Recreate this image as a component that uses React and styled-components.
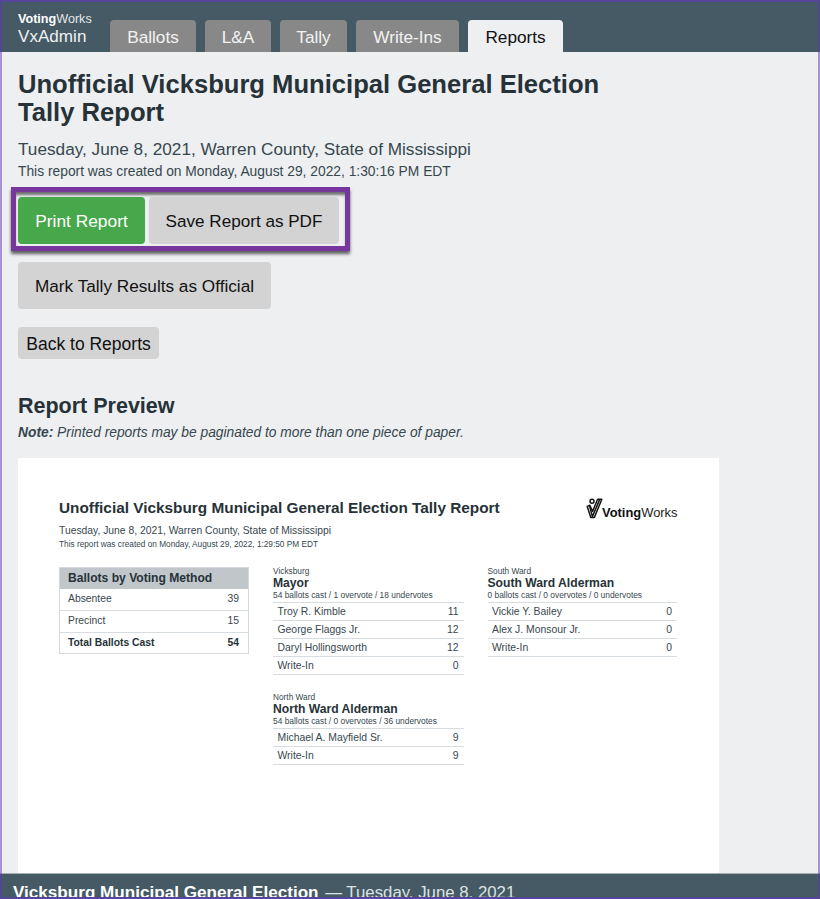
import React from 'react';
import styled, { createGlobalStyle } from 'styled-components';

const GlobalStyle = createGlobalStyle`
  * { box-sizing: border-box; }
  html, body { margin: 0; padding: 0; }
  body {
    font-family: "Liberation Sans", Arial, Helvetica, sans-serif;
    font-size: 17.2px;
    color: #37474f;
    background: #edeff0;
    overflow: hidden;
  }
  h1, h2, h3, p { margin: 0; }
`;

const Screen = styled.div`
  position: relative;
  display: flex;
  flex-direction: column;
  width: 820px;
  height: 899px;
  overflow: hidden;
  background: #edeff0;

  &::after {
    content: "";
    position: absolute;
    inset: 0;
    border: 2px solid rgba(96, 52, 190, 0.5);
    border-top-color: #58459a;
    border-bottom-color: #58459a;
    pointer-events: none;
  }
`;

const NavBar = styled.nav`
  flex: none;
  display: flex;
  align-items: flex-end;
  height: 52px;
  padding-left: 18px;
  background: #455a64;
`;

const Brand = styled.div`
  width: 92px;
  height: 40px;
  color: #fff;
`;

const BrandMaker = styled.div`
  font-size: 12.6px;
  line-height: 15px;
  color: #e4e8ea;

  strong { color: #fff; }
`;

const BrandApp = styled.div`
  font-size: 17.1px;
  line-height: 20px;
  color: #eef1f2;
`;

const Tabs = styled.div`
  display: flex;
  gap: 9px;
`;

const Tab = styled.button`
  width: ${(p) => p.$width}px;
  height: 32px;
  padding: 2px 0 0;
  border: 0;
  border-radius: 4px 4px 0 0;
  font: inherit;
  line-height: 28px;
  text-align: center;
  background: ${(p) => (p.$active ? '#edeff0' : '#888')};
  color: ${(p) => (p.$active ? '#111' : '#f3f3f3')};
`;

const Content = styled.main`
  flex: 1;
  min-height: 0;
  overflow: hidden;
  padding: 18px 18px 0;
`;

const PageTitle = styled.h1`
  width: 620px;
  font-size: 25.6px;
  line-height: 28px;
  color: #263238;
`;

const ElectionLine = styled.p`
  margin-top: 13px;
  font-size: 17.22px;
  line-height: 20px;
`;

const CreatedLine = styled.p`
  margin-top: 2px;
  font-size: 13.82px;
  line-height: 20px;
`;

const Highlight = styled.div`
  display: flex;
  gap: 4px;
  width: 339px;
  height: 64px;
  margin: 6px 0 0 -7px;
  padding: 5px 2px;
  border: 5px solid #77369b;
  box-shadow: 0 3px 3px rgba(0, 0, 0, 0.6), inset 0 4px 3px -1px rgba(0, 0, 0, 0.55);
`;

const Button = styled.button`
  display: block;
  width: ${(p) => p.$width}px;
  height: ${(p) => (p.$compact ? 32 : 47)}px;
  padding: 2px 0 0;
  border: 0;
  border-radius: 4px;
  font: inherit;
  font-size: ${(p) => p.$size || 17.2}px;
  text-align: center;
  white-space: nowrap;
  background: ${(p) => (p.$primary ? '#47a74b' : '#d3d3d3')};
  color: ${(p) => (p.$primary ? '#fff' : '#111')};
`;

const Actions = styled.div`
  display: flex;
  flex-direction: column;
  gap: 18px;
  margin-top: 11px;
`;

const PreviewTitle = styled.h2`
  margin-top: 34px;
  font-size: 21.5px;
  line-height: 26px;
  color: #263238;
`;

const PreviewNote = styled.p`
  margin-top: 5px;
  font-size: 13.8px;
  line-height: 18px;
  font-style: italic;
`;

const Paper = styled.section`
  width: 701px;
  height: 440px;
  margin-top: 16px;
  padding: 40px 41.5px 0 41px;
  background: #fff;
`;

const PaperHead = styled.header`
  display: flex;
  justify-content: space-between;
`;

const PaperTitle = styled.h2`
  font-size: 15.36px;
  line-height: 20px;
  color: #263238;
`;

const PaperDate = styled.p`
  margin-top: 6px;
  font-size: 10.33px;
  line-height: 14px;
`;

const PaperCreated = styled.p`
  font-size: 8.27px;
  line-height: 13px;
`;

const PaperLogo = styled.div`
  display: flex;
  align-items: flex-start;
  font-size: 12.9px;
  line-height: 16px;
  color: #222;

  svg { display: block; margin-right: -1px; }
  span { margin-top: 7px; }
  strong { color: #111; }
`;

const Columns = styled.div`
  display: grid;
  grid-template-columns: 190px 190px 189px;
  column-gap: 24.5px;
  align-items: start;
  margin-top: 15px;
`;

const MethodTable = styled.div`
  margin-top: 1px;
  border: 1px solid #d3d9dc;
`;

const MethodHead = styled.h3`
  height: 20.5px;
  padding-left: 8px;
  font-size: 12.1px;
  line-height: 20px;
  color: #263238;
  background: #c0c6ca;
`;

const MethodRow = styled.div`
  display: flex;
  justify-content: space-between;
  height: 21.5px;
  padding: 0 9px 0 8px;
  font-size: 10.33px;
  line-height: 20.5px;
  font-weight: ${(p) => (p.$total ? 700 : 400)};
  color: ${(p) => (p.$total ? '#263238' : '#37474f')};

  & + & { border-top: 1px solid #d6dcdf; }
`;

const Contest = styled.section`
  margin: 0 0 17px -0.5px;
`;

const District = styled.p`
  font-size: 8.3px;
  line-height: 10px;
`;

const ContestTitle = styled.h3`
  font-size: 12.15px;
  line-height: 14px;
  color: #263238;
`;

const ContestStats = styled.p`
  font-size: 8.4px;
  line-height: 11px;
`;

const ContestRows = styled.div`
  margin-top: 1px;
  border-top: 1px solid #d6dcdf;
`;

const ContestRow = styled.div`
  display: flex;
  justify-content: space-between;
  height: 18px;
  padding: 0 5px 0 4.5px;
  border-bottom: 1px solid #d6dcdf;
  font-size: 10.4px;
  line-height: 17px;
`;

const Footer = styled.footer`
  flex: none;
  height: 26px;
  padding: 9px 0 0 13px;
  border-top: 1px solid #a5afb4;
  font-size: 17.1px;
  line-height: 20px;
  white-space: nowrap;
  background: #455a64;
  color: #dde2e4;

  strong { color: #fff; margin-right: 2px; }
  span { font-size: 16.8px; }
`;

const TABS = [
  ['Ballots', 86],
  ['L&A', 66],
  ['Tally', 67],
  ['Write-Ins', 103],
  ['Reports', 95],
];

const METHODS = [
  ['Absentee', 39],
  ['Precinct', 15],
  ['Total Ballots Cast', 54],
];

const MAYOR = {
  district: 'Vicksburg',
  title: 'Mayor',
  stats: '54 ballots cast / 1 overvote / 18 undervotes',
  rows: [['Troy R. Kimble', 11], ['George Flaggs Jr.', 12], ['Daryl Hollingsworth', 12], ['Write-In', 0]],
};

const NORTH = {
  district: 'North Ward',
  title: 'North Ward Alderman',
  stats: '54 ballots cast / 0 overvotes / 36 undervotes',
  rows: [['Michael A. Mayfield Sr.', 9], ['Write-In', 9]],
};

const SOUTH = {
  district: 'South Ward',
  title: 'South Ward Alderman',
  stats: '0 ballots cast / 0 overvotes / 0 undervotes',
  rows: [['Vickie Y. Bailey', 0], ['Alex J. Monsour Jr.', 0], ['Write-In', 0]],
};

function ContestResults({ contest }) {
  return (
    <Contest>
      <District>{contest.district}</District>
      <ContestTitle>{contest.title}</ContestTitle>
      <ContestStats>{contest.stats}</ContestStats>
      <ContestRows>
        {contest.rows.map(([name, votes]) => (
          <ContestRow key={name}>
            <span>{name}</span>
            <span>{votes}</span>
          </ContestRow>
        ))}
      </ContestRows>
    </Contest>
  );
}

function LogoMark() {
  return (
    <svg width="17" height="21" viewBox="0 0 17 21" fill="none" stroke="#151515" strokeLinejoin="round">
      <circle cx="6" cy="3.2" r="2" strokeWidth="1.5" />
      <path d="M1.2 8.4 L3.8 7.2 L6.6 13.4 L11.6 1.2 L15.8 1.2 L8.4 19.4 L4.8 19.4 Z" strokeWidth="1.5" />
      <path d="M3.6 8 L6.4 18.6 L13.6 1.6" strokeWidth="1.5" />
    </svg>
  );
}

export default function App() {
  return (
    <>
      <GlobalStyle />
      <Screen>
        <NavBar>
          <Brand>
            <BrandMaker><strong>Voting</strong>Works</BrandMaker>
            <BrandApp>VxAdmin</BrandApp>
          </Brand>
          <Tabs>
            {TABS.map(([label, width]) => (
              <Tab key={label} $width={width} $active={label === 'Reports'}>{label}</Tab>
            ))}
          </Tabs>
        </NavBar>
        <Content>
          <PageTitle>Unofficial Vicksburg Municipal General Election Tally Report</PageTitle>
          <ElectionLine>Tuesday, June 8, 2021, Warren County, State of Mississippi</ElectionLine>
          <CreatedLine>This report was created on Monday, August 29, 2022, 1:30:16 PM EDT</CreatedLine>
          <Highlight>
            <Button $primary $width={127} $size={17.35}>Print Report</Button>
            <Button $width={190} $size={17.1}>Save Report as PDF</Button>
          </Highlight>
          <Actions>
            <Button $width={253}>Mark Tally Results as Official</Button>
            <Button $compact $width={141} $size={17.5}>Back to Reports</Button>
          </Actions>
          <PreviewTitle>Report Preview</PreviewTitle>
          <PreviewNote><strong>Note:</strong> Printed reports may be paginated to more than one piece of paper.</PreviewNote>
          <Paper>
            <PaperHead>
              <div>
                <PaperTitle>Unofficial Vicksburg Municipal General Election Tally Report</PaperTitle>
                <PaperDate>Tuesday, June 8, 2021, Warren County, State of Mississippi</PaperDate>
                <PaperCreated>This report was created on Monday, August 29, 2022, 1:29:50 PM EDT</PaperCreated>
              </div>
              <PaperLogo>
                <LogoMark />
                <span><strong>Voting</strong>Works</span>
              </PaperLogo>
            </PaperHead>
            <Columns>
              <MethodTable>
                <MethodHead>Ballots by Voting Method</MethodHead>
                {METHODS.map(([label, count]) => (
                  <MethodRow key={label} $total={label.startsWith('Total')}>
                    <span>{label}</span>
                    <span>{count}</span>
                  </MethodRow>
                ))}
              </MethodTable>
              <div>
                <ContestResults contest={MAYOR} />
                <ContestResults contest={NORTH} />
              </div>
              <ContestResults contest={SOUTH} />
            </Columns>
          </Paper>
        </Content>
        <Footer>
          <strong>Vicksburg Municipal General Election</strong><span> — Tuesday, June 8, 2021</span>
        </Footer>
      </Screen>
    </>
  );
}
